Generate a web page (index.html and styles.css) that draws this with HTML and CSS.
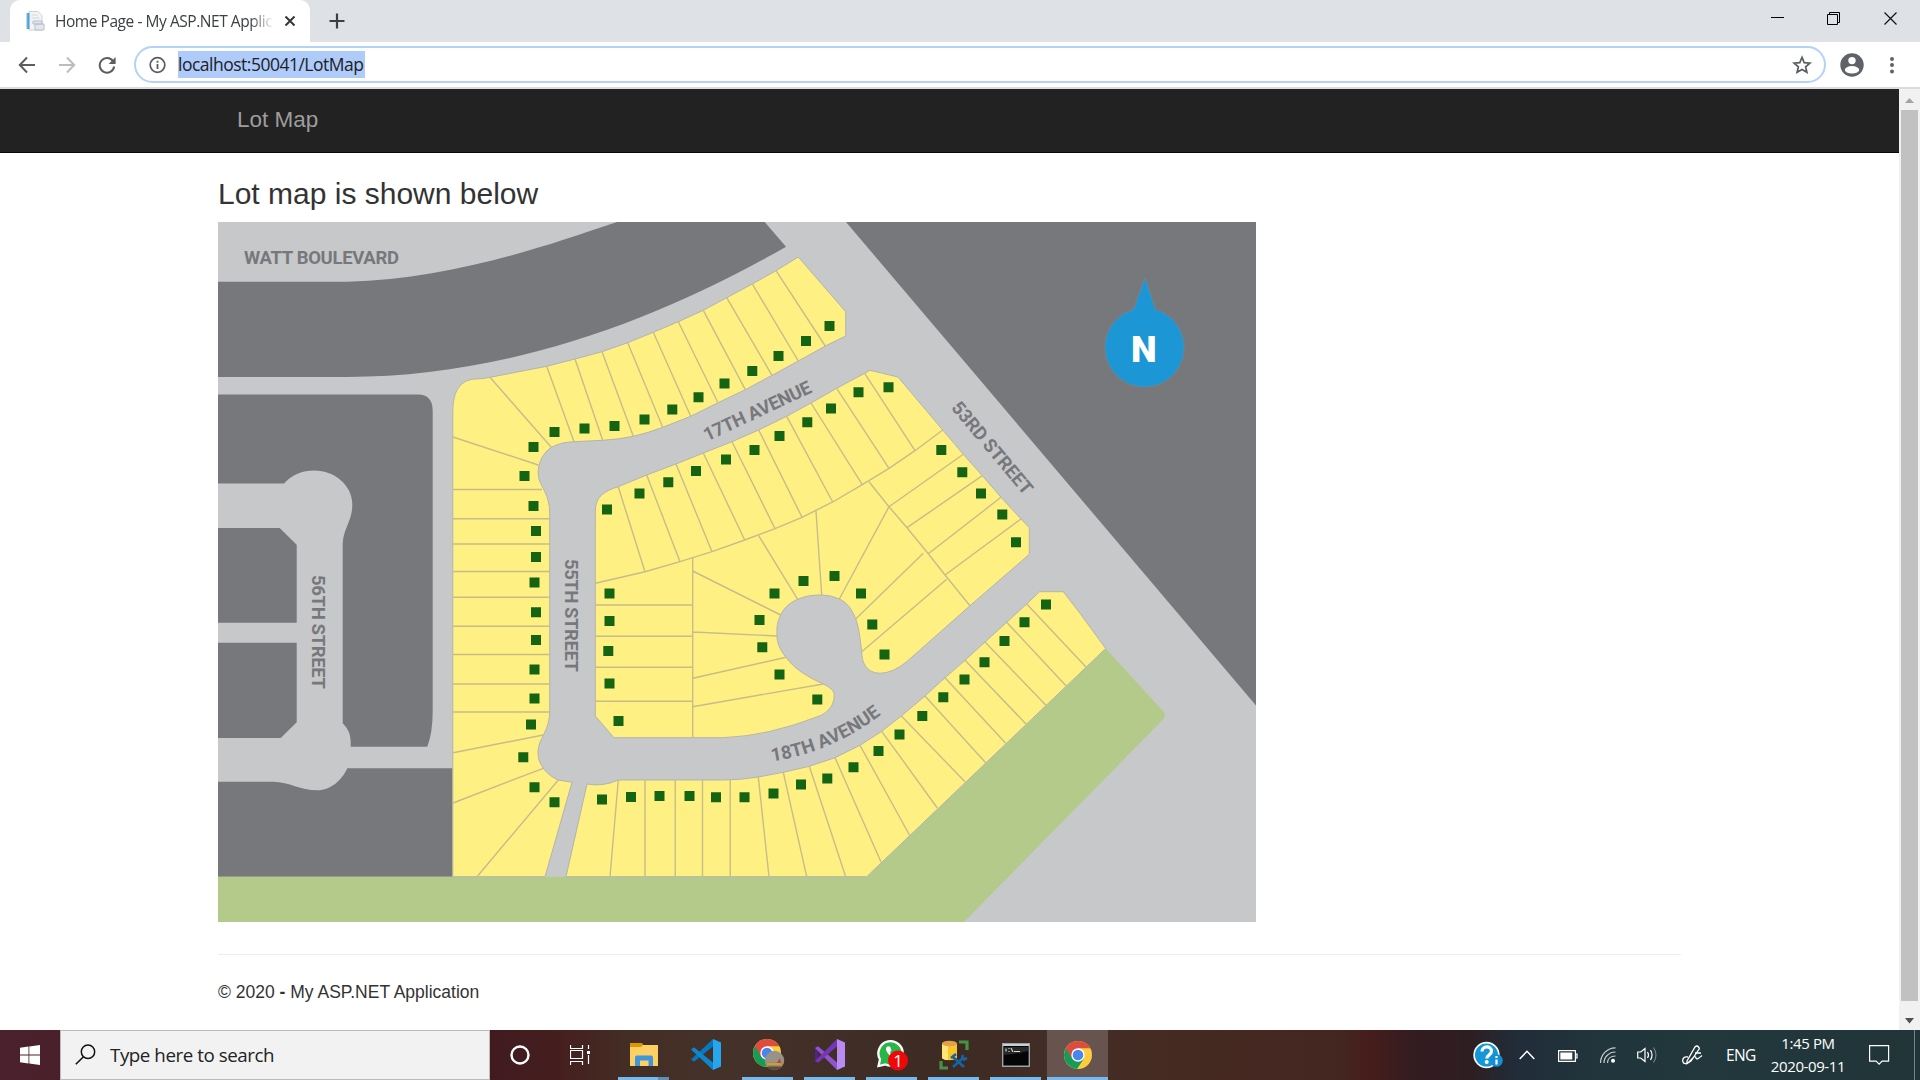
FILE: index.html
```html
<!DOCTYPE html>
<html lang="en">
<head>
<meta charset="utf-8">
<title>Home Page - My ASP.NET Application</title>
<link rel="stylesheet" href="styles.css">
</head>
<body>
<div class="screen">
  <header class="tabstrip">
    <div class="tab">
      <svg class="favicon" width="20" height="20" viewBox="0 0 20 20"><path d="M4 .5h9l4 4V19H4z" fill="#f2f3f5" stroke="#cfd2d8"/><path d="M1 2h3.500v16H1z" fill="#4fa3d8"/><path d="M1 2h1.200v16H1z" fill="#b9dcf2"/><path d="M6.500 4h6M6.500 7h8" stroke="#d3d7de"/><path d="M8 10h9v3H8zM10 13h9v6h-9z" fill="#e3e6ec" stroke="#b8bdc9"/></svg>
      <span class="tab-title">Home Page - My ASP.NET Application</span>
      <svg class="tab-close" width="12" height="12" viewBox="0 0 12 12"><path d="M1.500 1.500l9 9M10.500 1.500l-9 9" stroke="#33363a" stroke-width="2"/></svg>
    </div>
    <svg class="new-tab" width="16" height="16" viewBox="0 0 16 16"><path d="M8 .5v15M.5 8h15" stroke="#3c4043" stroke-width="2.200"/></svg>
    <div class="window-buttons">
      <svg width="14" height="14" viewBox="0 0 14 14"><path d="M0 5.500h13" stroke="#000"/></svg>
      <svg width="14" height="14" viewBox="0 0 14 14"><path d="M.5 2.500h10v10H.5zM2.500 2.500v-2h10v10h-2" fill="none" stroke="#000"/></svg>
      <svg width="14" height="14" viewBox="0 0 14 14"><path d="M.5.5l12 12M12.500.5l-12 12" stroke="#111" stroke-width="1.200"/></svg>
    </div>
  </header>

  <div class="toolbar">
    <div class="nav-buttons">
      <svg width="18" height="18" viewBox="0 0 18 18"><path d="M17 9H2M9 1.500L1.800 9 9 16.500" fill="none" stroke="#5a5d61" stroke-width="2"/></svg>
      <svg width="18" height="18" viewBox="0 0 18 18"><path d="M1 9h15M9 1.500L16.200 9 9 16.500" fill="none" stroke="#bcbdbf" stroke-width="2"/></svg>
      <svg width="18" height="18" viewBox="0 0 18 18"><path d="M15.300 5.600A7.300 7.300 0 1 0 16.200 10.500" fill="none" stroke="#5a5d61" stroke-width="2"/><path d="M17.600 1v7h-7z" fill="#5a5d61"/></svg>
    </div>
    <div class="omnibox">
      <svg width="18" height="18" viewBox="0 0 18 18"><circle cx="9.500" cy="9" r="7.300" fill="none" stroke="#5a5d61" stroke-width="1.700"/><path d="M9.500 8v5M9.500 4.800v2" stroke="#5a5d61" stroke-width="1.800"/></svg>
      <span class="url">localhost:50041/LotMap</span>
      <svg class="star" width="20" height="20" viewBox="0 0 20 20"><path d="M10 2.400l2.200 5.200 5.700.5-4.300 3.700 1.300 5.500L10 14.400l-4.900 2.900 1.300-5.500-4.300-3.700 5.700-.5z" fill="none" stroke="#5a5d61" stroke-width="1.700"/></svg>
    </div>
    <svg class="avatar" width="24" height="24" viewBox="0 0 24 24"><circle cx="12" cy="12" r="11.700" fill="#5f6368"/><circle cx="12" cy="7.600" r="3.700" fill="#fff"/><ellipse cx="12" cy="16.800" rx="7.200" ry="3.700" fill="#fff"/></svg>
    <svg class="menu-dots" width="6" height="18" viewBox="0 0 6 18"><g fill="#5f6368"><circle cx="3" cy="3" r="2"/><circle cx="3" cy="9" r="2"/><circle cx="3" cy="15.500" r="2"/></g></svg>
  </div>

  <div class="viewport">
    <div class="page">
      <nav class="navbar"><div class="container"><a class="brand">Lot Map</a></div></nav>
      <main class="container">
        <h3 class="heading">Lot map is shown below</h3>
        <svg class="map" width="1038" height="700" viewBox="218 222 1038 700">
          <defs><path id="curve18" d="M772 761.500Q835 752 887 710"/></defs>
          <g class="block">
            <path d="M218 281.700H347C450 279 540 248 617 222H764.700L786 246.700C650 325 500 377 347 377H218Z"/>
            <path d="M846 222L1256 705.500V222Z"/>
            <path d="M218 394.500H418Q432.700 394.500 432.700 411V711Q432.700 733 427.300 746.700H350.700V741.700Q350.700 731 342.700 723.300V547C342.700 527 352.300 523 352.300 504C352.300 486 335 470.600 314.300 470.600Q296 470.600 284 483.500H218Z"/>
            <path d="M218 528H279.700L296.700 544.700V622.700H218Z"/>
            <path d="M218 642.700H296.700V722.300L280.700 738H218Z"/>
            <path d="M218 781.700H273C290 782 300 790.300 317.500 790.300C331 790.300 342 780 347.300 768.300H452.700V876.700H218Z"/>
          </g>
          <path class="green" d="M218 876.700H866.700L1105.700 648.500L1163 711Q1166.500 715 1163 719.500L964 922H218Z"/>
          <g class="lots">
            <path d="M452.800 876.700V411.700C452.800 390 461 380 475 379Q483 379 490 377.300L546.700 366.300L575 359L602 351.700L627.700 342.700L653.300 332.300L678.300 321.700L703.300 310.300L726.700 297.700L752.300 284L776 270.700L798.300 257L845.700 311.700V336L825.300 346L798.300 361L772 375.300L745.300 389.700L718 402.700L690.700 416.300L662.700 427.300Q648 433 633.300 436.300Q618 439.500 602.700 440.300L574 441.700Q561 442 551.300 447.300C541 454 536 468 539 479C541 487 549.700 495 549.700 513V710C549.700 733 538 737 538 753.300C538 765 548 776 558.300 780L572 782.300L545 876.700Z"/>
            <path d="M566 876.700L587 784Q603 787 618.300 780H723.300Q740 780 758.300 777L783.300 772.300L809.300 766.300L835 757.700L860 745.300L881.700 731.300L901.300 716L925 696L945 677.700L965 660.300L985 642L1006.700 622.300L1026.700 604L1039.500 591.700H1063.300L1080 613.300L1105.700 648.500L866.700 876.700Z"/>
            <path d="M595.300 511C595.300 497 604 491 618.300 486.700L646.700 475L676 464L703.300 453L732 441.700L758.700 430L786.700 416.300L811 403L836.700 388.300L864.700 373.300L870 370.300L898 377L942.700 430L963.300 454.300L982.300 475.700L1001 497.300L1021 519L1029.300 527.700V554.300L970 605.700L906.700 661.700Q893 673 880 673.300C866 673 861.700 662 861.700 651.700C860 637 858.500 626 855.700 619C851 607 846 602 839.300 599Q831 595 821.700 595C812 595 805 596 797.700 599.300C789 603 784 608 780.700 615C776 625 777 630 777 636C777 643 780 650 786 657.300C795 670 810 678 823.300 684C835 690 834.500 693 834 699C832 709 825 714 818 716.500Q768 736 723.300 737.700H614L595.300 716Z"/>
          </g>
          <g class="lines">
            <path d="M490 377.300L551.300 447.300M453 437L538.300 465M546.700 366.300L574 441.700M575 359L602.700 440.300M602 351.700L633.300 436.300M627.700 342.700L662.700 427.300M653.300 332.300L690.700 416.300M678.300 321.700L718 402.700M703.300 310.300L745.300 389.700M726.700 297.700L772 375.300M752.300 284L798.300 361M776 270.700L825.300 346"/>
            <path d="M453 489.500H542M453 518.700H549.500M453 544H549.500M453 571.500H549.500M453 597.300H549.500M453 626.300H549.500M453 654.500H549.500M453 684H549.500M453 712H549.500M453 752.700L543.300 735M453 803L543.300 768.300M477 876.700L558.300 780"/>
            <path d="M618.300 780L610 876.700M645 780V876.700M675.200 780V876.700M702.500 780V876.700M730.200 780V876.700M758.300 777L769 876.700M783.300 772.300L806.700 876.700M809.300 766.300L845.700 876.700M835 757.700L881 862M860 745.300L910 836M881.700 731.300L937.300 808M901.300 716L965 781.700M925 696L985.700 762.700M945 677.700L1005.700 743.300M965 660.300L1026.700 724.700M985 642L1046 705.300M1006.700 622.300L1066 685.700M1026.700 604L1086 667"/>
            <path d="M595.300 583.300L645 571.700L680 561.700L712 551.700L744.700 540L775 528.700L802 517.300L832.700 502L862.300 484.700L889 468.300L915 450.700L942.700 430M618.300 487L645 571.700M646.700 475L680 561.700M676 464L712 551.700M703.300 453L744.700 540M732 441.700L775 528.700M758.700 430L802 517.300M786.700 416.300L832.700 502M811 403L862.300 484.700M836.700 388.300L889 468.300M864.700 373.300L915 450.700"/>
            <path d="M869 481.700L889 506.700L907 527.700L928.300 553.700L945 575L970 605.700M889 506.700L963.300 454.300M907 527.700L982.300 475.700M928.300 553.700L1001 497.300M945 575L1021 519M946.700 579.300L861.700 651.700M923.300 553.300L855.700 619M889 506.700L839.300 599M816 511L821.700 595M758.700 535.700L797.700 599.300M692.700 557.700V737.700M692.700 571L780.700 615M692.700 632L777 636M692.700 678.300L786 657.300M692.700 706.700L823.300 684M595.300 605H692.700M595.300 636.300H692.700M595.300 667.300H692.700M595.300 701.300H692.700"/>
          </g>
          <path class="pins" d="M554.500 432h0M584.500 428.500h0M614.500 426h0M644.500 419.500h0M533.500 447h0M524.500 476h0M533.500 506h0M536 531h0M536 557h0M607 509.500h0M639.500 493.500h0M534.500 582.500h0M536 612.300h0M536 640h0M534.500 669.500h0M534.500 698.500h0M531 724.500h0M523.300 757.300h0M534.500 787.300h0M554.500 802.300h0M602 799.500h0M631 797h0M609.500 593.500h0M609.500 621h0M608.300 651h0M609.500 683.500h0M618.500 721h0M672.300 409.500h0M698.500 397.300h0M724.500 383.500h0M752.300 371h0M778.500 356h0M806 341h0M829.500 326h0M668.300 482.300h0M696 471h0M726 459.500h0M754.500 450h0M779.500 436h0M807.300 422.300h0M831 408.500h0M858.500 392.300h0M888.500 387.300h0M941.300 450h0M962.300 472.300h0M981 493.500h0M1002.300 514.500h0M1016 542.300h0M834.500 576h0M803.500 581h0M774.500 593.500h0M759.500 620h0M762.300 647.300h0M779.500 674.500h0M817.300 699.500h0M861 593.500h0M872.300 624.500h0M884.500 654.500h0M1046 604.500h0M1024.500 622.300h0M1004.500 641h0M984.500 662.300h0M964.500 679.500h0M943.300 697.300h0M922.300 716h0M899.500 734.500h0M878.500 751h0M853.500 767.300h0M827.300 778.500h0M801 784.500h0M773.500 793.500h0M744.500 797.300h0M716 797.300h0M689.500 796h0M659.500 796h0"/>
          <g class="street">
            <text x="244" y="264" textLength="155">WATT BOULEVARD</text>
            <text transform="translate(707 441.500) rotate(-25)" textLength="117">17TH AVENUE</text>
            <text transform="translate(950.500 408) rotate(50)" textLength="115">53RD STREET</text>
            <text transform="translate(312 575) rotate(90)" textLength="114">56TH STREET</text>
            <text transform="translate(565 559) rotate(90)" textLength="113">55TH STREET</text>
            <text><textPath href="#curve18" textLength="120">18TH AVENUE</textPath></text>
          </g>
          <path class="compass" d="M1145 277.700L1155.500 309.500A39.500 39.500 0 1 1 1133.500 309.500Z"/>
          <text class="north" x="1143.800" y="361.500" text-anchor="middle">N</text>
        </svg>
        <hr class="rule">
        <footer class="copyright">© 2020 <b>-</b> My ASP.NET Application</footer>
      </main>
    </div>
    <div class="scrollbar">
      <svg width="21" height="21" viewBox="0 0 21 21"><path d="M6 14L10.500 9L15 14Z" fill="#a3a3a3"/></svg>
      <div class="thumb"></div>
      <svg width="21" height="29" viewBox="0 0 21 29"><path d="M6 17L10.500 22.500L15 17Z" fill="#505050"/></svg>
    </div>
  </div>

  <div class="taskbar">
    <div class="start"><svg width="20" height="20" viewBox="0 0 20 20"><path d="M0 2.800L8.500 1.500V9.500H0zM9.300 1.400L20 0V9.500H9.300zM0 10.400H8.500V18.500L0 17.300zM9.300 10.400H20V20L9.300 18.600z" fill="#fff"/></svg></div>
    <div class="search">
      <svg width="21" height="21" viewBox="0 0 21 21"><circle cx="13" cy="7.800" r="6.700" fill="none" stroke="#111" stroke-width="1.500"/><path d="M8.500 12.800L.8 20.300" stroke="#111" stroke-width="1.600"/></svg>
      <span>Type here to search</span>
    </div>
    <div class="system-icons">
      <svg width="20" height="20" viewBox="0 0 20 20"><circle cx="10" cy="10" r="8.500" fill="none" stroke="#fff" stroke-width="2.400"/></svg>
      <svg width="21" height="20" viewBox="0 0 21 20"><path d="M.5 0v3.500h12V0M.5 5.500h12v8H.5zM.5 20v-3.500h12V20M18.500 0v4M18.500 10v9" fill="none" stroke="#fff" stroke-width="1.200"/><path d="M17 6h3v3h-3z" fill="#fff"/></svg>
    </div>
    <div class="apps">
      <div class="app open grouped"><svg width="28" height="26" viewBox="0 0 28 26"><path d="M0 1h12l2 3h-2v4H0z" fill="#dc9606"/><path d="M0 5h11l2-2h15v21H0z" fill="#fdd063"/><path d="M5 24V15.500Q5 13.500 7 13.500H21Q23 13.500 23 15.500V24H18.500V18.500H10V24z" fill="#3f96dc"/></svg></div>
      <div class="app"><svg width="30" height="31" viewBox="0 0 30 31"><path d="M0 20.500L3 22.700 22 7.500V0Z" fill="#0a76bb"/><path d="M0 10.500L3 8.300 22 23.500V31Z" fill="#0a87cf"/><path d="M22 0L30 3.500V27.500L22 31Z" fill="#27a6f0"/></svg></div>
      <div class="app open shifted"><svg width="32" height="32" viewBox="0 0 32 32"><use href="#chrome-logo"/><circle cx="21.500" cy="21.500" r="9.700" fill="#96938d"/><path d="M12 23h19a9.700 9.700 0 0 1-19 0z" fill="#a88a55"/><path d="M14 27.500h15a9.700 9.700 0 0 1-15 0z" fill="#554f43"/><path d="M24 24l3-5 1 5z" fill="#c93f2c"/><path d="M14 25h14" stroke="#e0b04b"/></svg></div>
      <div class="app open"><svg width="30" height="31" viewBox="0 0 30 31"><path d="M0 9L3 7.300V23.700L0 22Z" fill="#52218a"/><path d="M0 9L3 7.300 22 23.500V31Z" fill="#8f54cf"/><path d="M0 22L3 23.700 22 7.500V0Z" fill="#7436b3"/><path d="M22 0L30 3.500V27.500L22 31Z" fill="#b98af0"/></svg></div>
      <div class="app open shifted"><svg width="32" height="32" viewBox="0 0 32 32"><path d="M1.500 27L3 20.500A12.200 12.200 0 1 1 8.500 25.500Z" fill="#28b648" stroke="#fff" stroke-width="2.300"/><path d="M10.500 7.500c-2.500 1-2 5 2.500 9s8.500 4.500 9.500 1.500l-4-2.500-2 1.500c-2-1-3-2.500-3.500-4l1.500-1.500-1.500-4z" fill="#fff"/><circle cx="21" cy="21.500" r="10" fill="#f00808"/><text x="21" y="28" class="badge-count" text-anchor="middle">1</text></svg></div>
      <div class="app open"><svg width="30" height="30" viewBox="0 0 30 30"><path d="M3 3.500v14c0 3.500 15 3.500 15 0v-14z" fill="#f7c62b"/><path d="M3 3.500v14c0 1.500 3 2.500 6 2.700V4z" fill="#ffe477"/><ellipse cx="10.500" cy="3.500" rx="7.500" ry="2.800" fill="#e3a04b"/><path d="M20 2h8v8M2 21v7h7" fill="none" stroke="#469347" stroke-width="3.200"/><path d="M14 27l11-10M14 17l11 10M12 18l5-4M23 18l1-3M24 20l4-2" stroke="#1563a8" stroke-width="2.600"/></svg></div>
      <div class="app open"><svg width="28" height="24" viewBox="0 0 28 24"><path d="M.7.7h26.600v22.600H.7z" fill="#050505" stroke="#9aa3a8" stroke-width="1.400"/><path d="M1 1h26v2H1z" fill="#c7d0d5"/><path d="M2 12Q14 11 26 8V4H2z" fill="#292929"/><path d="M4 5.500v3M7 5v1M7 8v1M9 5l2 4M12 8.500h6" stroke="#ddd" stroke-width="1.100"/></svg></div>
      <div class="app open active"><svg width="28" height="28" viewBox="0 0 28 28"><g id="chrome-logo"><circle cx="14" cy="14" r="14" fill="#fdcd3f"/><path d="M14 14L1.900 7A14 14 0 0 0 13 28L20 17.500Z" fill="#169c56"/><path d="M14 14L7.900 17.500 1.900 7A14 14 0 0 1 26.200 7.200H14Z" fill="#de4b3f"/><circle cx="14" cy="14" r="6.700" fill="#fff"/><circle cx="14" cy="14" r="5.300" fill="#4a84ee"/></g></svg></div>
    </div>
    <div class="tray">
      <svg class="help" width="30" height="28" viewBox="0 0 30 28"><circle cx="13.500" cy="14" r="13.200" fill="#fff"/><circle cx="13.500" cy="14" r="11.500" fill="#1496d8"/><path d="M9 10.500c0-6 9.500-6 9.500-.5 0 4-4.700 4-4.700 7.500" fill="none" stroke="#fff" stroke-width="3.200"/><circle cx="13.700" cy="21" r="2" fill="#fff"/><circle cx="23.500" cy="19.500" r="6.300" fill="#1190d4"/><path d="M23.500 18.500v5M23.500 15v2" stroke="#fff" stroke-width="2.200"/></svg>
      <svg class="chevron" width="16" height="10" viewBox="0 0 16 10"><path d="M.7 9L8 1.300 15.300 9" fill="none" stroke="#fff" stroke-width="1.500"/></svg>
      <svg class="battery" width="20" height="12" viewBox="0 0 20 12"><path d="M.6.6h16.800v10.800H.6zM17.500 4h1.500v4h-1.500" fill="none" stroke="#fff" stroke-width="1.200"/><path d="M2.300 2.500h12v7h-12z" fill="#fff"/></svg>
      <svg class="wifi" width="16" height="16" viewBox="0 0 16 16"><path d="M.5 16C.5 8 7 .8 15.500.8M4 16c0-6 5-11 11.500-11M7.500 16c0-4 3-7 8-7" fill="none" stroke="#c5cdcf" stroke-width="1.200"/><circle cx="13" cy="13.800" r="2" fill="#fff"/></svg>
      <svg class="speaker" width="21" height="18" viewBox="0 0 21 18"><path d="M.7 6h3L8 2.500v13L3.700 12h-3zM10.500 6q2 3 0 6M13.500 4q3 5 0 10" fill="none" stroke="#fff" stroke-width="1.200"/><path d="M16.500 1.500q5 7.500 0 15" fill="none" stroke="#71827f" stroke-width="1.200"/></svg>
      <svg class="pen" width="21" height="20" viewBox="0 0 21 20"><path d="M5 16L13 2q2-2 3.500 0t0 3L9 16l-4 2.500zM6 12c-4-1-6 2-5 5s5 1.500 8-2 4-4.500 5-2 4-1 6-2.500M13 8h6" fill="none" stroke="#fff" stroke-width="1.300"/></svg>
      <span class="lang">ENG</span>
      <div class="clock"><span class="time">1:45 PM</span><span class="date">2020-09-11</span></div>
      <svg class="notice" width="21" height="21" viewBox="0 0 21 21"><path d="M.6.600h19v15.500h-6.500l-3 3-3-3H.6z" fill="none" stroke="#fff" stroke-width="1.200"/></svg>
      <div class="peek"></div>
    </div>
  </div>
</div>
</body>
</html>
```
FILE: styles.css
```css
* { box-sizing: border-box; }
body { margin: 0; background: #fff; overflow: hidden; }
svg { display: block; flex: none; }

.screen {
  width: 1920px;
  height: 1080px;
  display: grid;
  grid-template-rows: 42px 47px 941px 50px;
  font-family: "Open Sans", "Noto Sans", sans-serif;
}

/* Browser tab strip */
.tabstrip { display: flex; align-items: center; background: #dee1e6; padding-left: 10px; }
.tab {
  width: 300px;
  height: 42px;
  padding: 0 14px 0 15px;
  display: flex;
  align-items: center;
  background: #fff;
  border-radius: 10px 10px 0 0;
}
.tab-title {
  width: 219px;
  margin-left: 10px;
  padding-bottom: 1px;
  overflow: hidden;
  white-space: nowrap;
  font-size: 15.5px;
  letter-spacing: -0.45px;
  color: #3c4043;
  -webkit-mask-image: linear-gradient(90deg, #000 195px, transparent 219px);
  mask-image: linear-gradient(90deg, #000 195px, transparent 219px);
}
.tab-close { margin-left: 11px; }
.new-tab { margin-left: 19px; }
.window-buttons { margin-left: auto; margin-right: 22px; display: flex; gap: 43px; padding-bottom: 4px; }
.window-buttons svg:first-child { margin-right: -1px; }

/* Browser toolbar */
.toolbar { display: flex; align-items: center; border-bottom: 2px solid #dadce2; padding-left: 18px; }
.nav-buttons { display: flex; gap: 22px; }
.omnibox {
  width: 1692px;
  height: 37px;
  margin-left: 18px;
  padding: 0 12px 0 12px;
  display: flex;
  align-items: center;
  border: 2px solid #b3d2fa;
  border-radius: 19px;
}
.url {
  height: 27px;
  width: 187px;
  margin-left: 12px;
  line-height: 26px;
  font-size: 17.5px;
  letter-spacing: -0.5px;
  white-space: nowrap;
  background: #aecbfa;
  color: #202124;
}
.star { margin-left: auto; }
.avatar { margin-left: 14px; }
.menu-dots { margin-left: 25px; }

/* Web page */
.viewport { display: grid; grid-template-columns: 1899px 21px; min-height: 0; }
.page { font-family: "Liberation Sans", Arial, sans-serif; color: #333; }
.container { width: 1463px; margin-left: 218px; }
.navbar { height: 64px; background: #222; border-bottom: 1px solid #080808; }
.brand { display: block; padding: 18px 0 0 19px; font-size: 22.5px; line-height: 25px; color: #9d9d9d; }
.heading { margin: 25px 0 12px; font-size: 30px; line-height: 32px; font-weight: 400; }
.map { background: #c7c8ca; }
.rule { margin: 32px 0 0; border: 0; border-top: 1px solid #eee; }
.copyright { margin-top: 25px; font-size: 17.5px; line-height: 25px; }

.block { fill: #77787b; }
.green { fill: #b4ca8b; }
.lots { fill: #fff083; stroke: #b4b4aa; stroke-width: 1; }
.lines { fill: none; stroke: #c6bd88; stroke-width: 1.4; }
.pins { fill: none; stroke: #156414; stroke-width: 10; stroke-linecap: square; }
.street { font: 700 18.5px Roboto, sans-serif; fill: #77787b; }
.compass { fill: #1c96d4; stroke: #758a96; stroke-width: .6; }
.north { font: 900 36.5px Roboto, sans-serif; fill: #fff; }

.scrollbar { background: #f1f1f1; display: grid; grid-template-rows: 21px 891px 29px; justify-items: center; }
.thumb { width: 17px; background: #c1c1c1; }

/* Windows taskbar */
.taskbar {
  display: flex;
  background: linear-gradient(90deg, #4a212c 0, #411a20 490px, #451f1e 560px, #432e25 630px, #44322a 740px, #3d2b23 960px, #432d27 1050px, #452b22 1160px, #442620 1340px, #471d1c 1370px, #351c21 1410px, #2d1e22 1470px, #212c38 1515px, #21353c 1600px, #22383c 1700px, #213539 100%);
}
.start { width: 60px; display: grid; place-items: center; }
.search {
  width: 430px;
  padding: 0 0 2px 14px;
  display: flex;
  align-items: center;
  gap: 14px;
  background: #f2f2f2;
  border: 1px solid #bdbabb;
  font-size: 18.75px;
  letter-spacing: -0.45px;
  color: #222;
}
.system-icons { display: flex; align-items: center; gap: 40px; margin-left: 20px; width: 103px; }
.apps { display: flex; }
.app { width: 61px; margin-right: 1px; display: grid; place-items: center; border-bottom: 3px solid transparent; padding-top: 2px; }
.open {
  border-bottom: 0;
  padding-bottom: 3px;
  background: linear-gradient(#76b9ed, #76b9ed) center bottom / 51px 3px no-repeat;
}
.shifted { padding-left: 3px; }
.grouped { background: linear-gradient(90deg, #76b9ed 40px, #5e8fb6 40px) center bottom / 51px 3px no-repeat; }
.active { background: linear-gradient(#76b9ed, #76b9ed) center bottom / 61px 3px no-repeat, #68544f; }
.badge-count { font: 17px "Open Sans", sans-serif; fill: #fff; }

.tray { margin-left: auto; display: flex; align-items: center; color: #fff; font-size: 15px; }
.chevron { margin-left: 16px; }
.battery { margin-left: 23px; margin-top: 2px; }
.wifi { margin-left: 22px; }
.speaker { margin-left: 21px; }
.pen { margin-left: 24px; }
.lang { width: 30px; margin-left: 23px; font-size: 15.5px; letter-spacing: -0.6px; }
.clock { width: 78px; margin-left: 13px; display: flex; flex-direction: column; align-items: center; line-height: 23px; letter-spacing: -0.4px; white-space: nowrap; }
.notice { margin-left: 22px; }
.peek { width: 6px; height: 50px; margin-left: 24px; border-left: 1px solid #78868a; }
```
